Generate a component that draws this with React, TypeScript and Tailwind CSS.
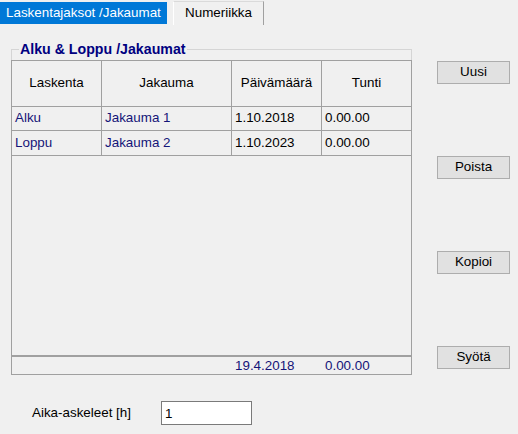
import React from "react";

type Row = {
  laskenta: string;
  jakauma: string;
  pvm: string;
  tunti: string;
};

const rows: Row[] = [
  { laskenta: "Alku", jakauma: "Jakauma 1", pvm: "1.10.2018", tunti: "0.00.00" },
  { laskenta: "Loppu", jakauma: "Jakauma 2", pvm: "1.10.2023", tunti: "0.00.00" },
];

const buttons = ["Uusi", "Poista", "Kopioi", "Syötä"];

const App: React.FC = () => {
  return (
    <div
      className="w-[518px] h-[434px] bg-[#f0f0f0] text-[13.4px] text-black overflow-hidden"
      style={{ fontFamily: '"Liberation Sans", Arial, sans-serif' }}
    >
      {/* tabs */}
      <div className="flex items-start h-[25px]">
        <div className="mt-[2px] h-[22px] w-[167px] pl-[6px] flex items-center bg-[#0078d7] text-white">
          Laskentajaksot /Jakaumat
        </div>
        <div className="ml-[6px] mt-[1px] h-[24px] w-[91px] flex items-center justify-center border-l border-l-white border-r border-r-[#a0a0a0] border-t border-t-[#dadada]">
          Numeriikka
        </div>
      </div>

      <div className="flex pt-[17px]">
        <fieldset className="ml-[11px] w-[401px] border border-[#d5d5d5] border-b-0">
          <legend className="ml-[7px] px-[1px] font-bold text-[14.2px] text-[#000080] leading-[15px]">
            Alku &amp; Loppu /Jakaumat
          </legend>
          <div className="-mx-px mt-[3px] h-[315px] flex flex-col border border-[#a0a0a0]">
            <div className="flex h-[46px] shrink-0 border-b border-[#a0a0a0]">
              <div className="w-[90px] flex items-center justify-center border-r border-[#a0a0a0]">Laskenta</div>
              <div className="w-[130px] flex items-center justify-center border-r border-[#a0a0a0]">Jakauma</div>
              <div className="w-[90px] flex items-center justify-center border-r border-[#a0a0a0]">Päivämäärä</div>
              <div className="flex-1 flex items-center justify-center">Tunti</div>
            </div>
            {rows.map((r, i) => (
              <div
                key={r.laskenta}
                className={`flex shrink-0 border-b border-[#a0a0a0] ${i === 0 ? "h-[24px]" : "h-[25px]"}`}
              >
                <div className="w-[90px] pl-[3px] flex items-center border-r border-[#a0a0a0] text-[#141478]">{r.laskenta}</div>
                <div className="w-[130px] pl-[3px] flex items-center border-r border-[#a0a0a0] text-[#141478]">{r.jakauma}</div>
                <div className="w-[90px] pl-[3px] flex items-center border-r border-[#a0a0a0]">{r.pvm}</div>
                <div className="flex-1 pl-[3px] flex items-center">{r.tunti}</div>
              </div>
            ))}
            <div className="flex-1" />
            <div className="flex h-[19px] shrink-0 border-t-2 border-[#a0a0a0] text-[#141478]">
              <div className="w-[90px]" />
              <div className="w-[130px]" />
              <div className="w-[90px] pl-[3px] pt-[1px] flex items-center">19.4.2018</div>
              <div className="flex-1 pl-[3px] pt-[1px] flex items-center">0.00.00</div>
            </div>
          </div>
        </fieldset>

        <div className="ml-[25px] pt-[19px] flex flex-col gap-[72px]">
          {buttons.map((b) => (
            <button
              key={b}
              className="w-[73px] h-[23px] bg-[#e1e1e1] border border-[#adadad] flex items-center justify-center"
            >
              {b}
            </button>
          ))}
        </div>
      </div>

      <div className="flex items-center mt-[26px] pl-[32px]">
        <div className="w-[129px]">Aika-askeleet [h]</div>
        <input
          defaultValue="1"
          className="w-[91px] h-[24px] bg-white border border-[#7a7a7a] px-[3px] outline-none"
        />
      </div>
    </div>
  );
};

export default App;
